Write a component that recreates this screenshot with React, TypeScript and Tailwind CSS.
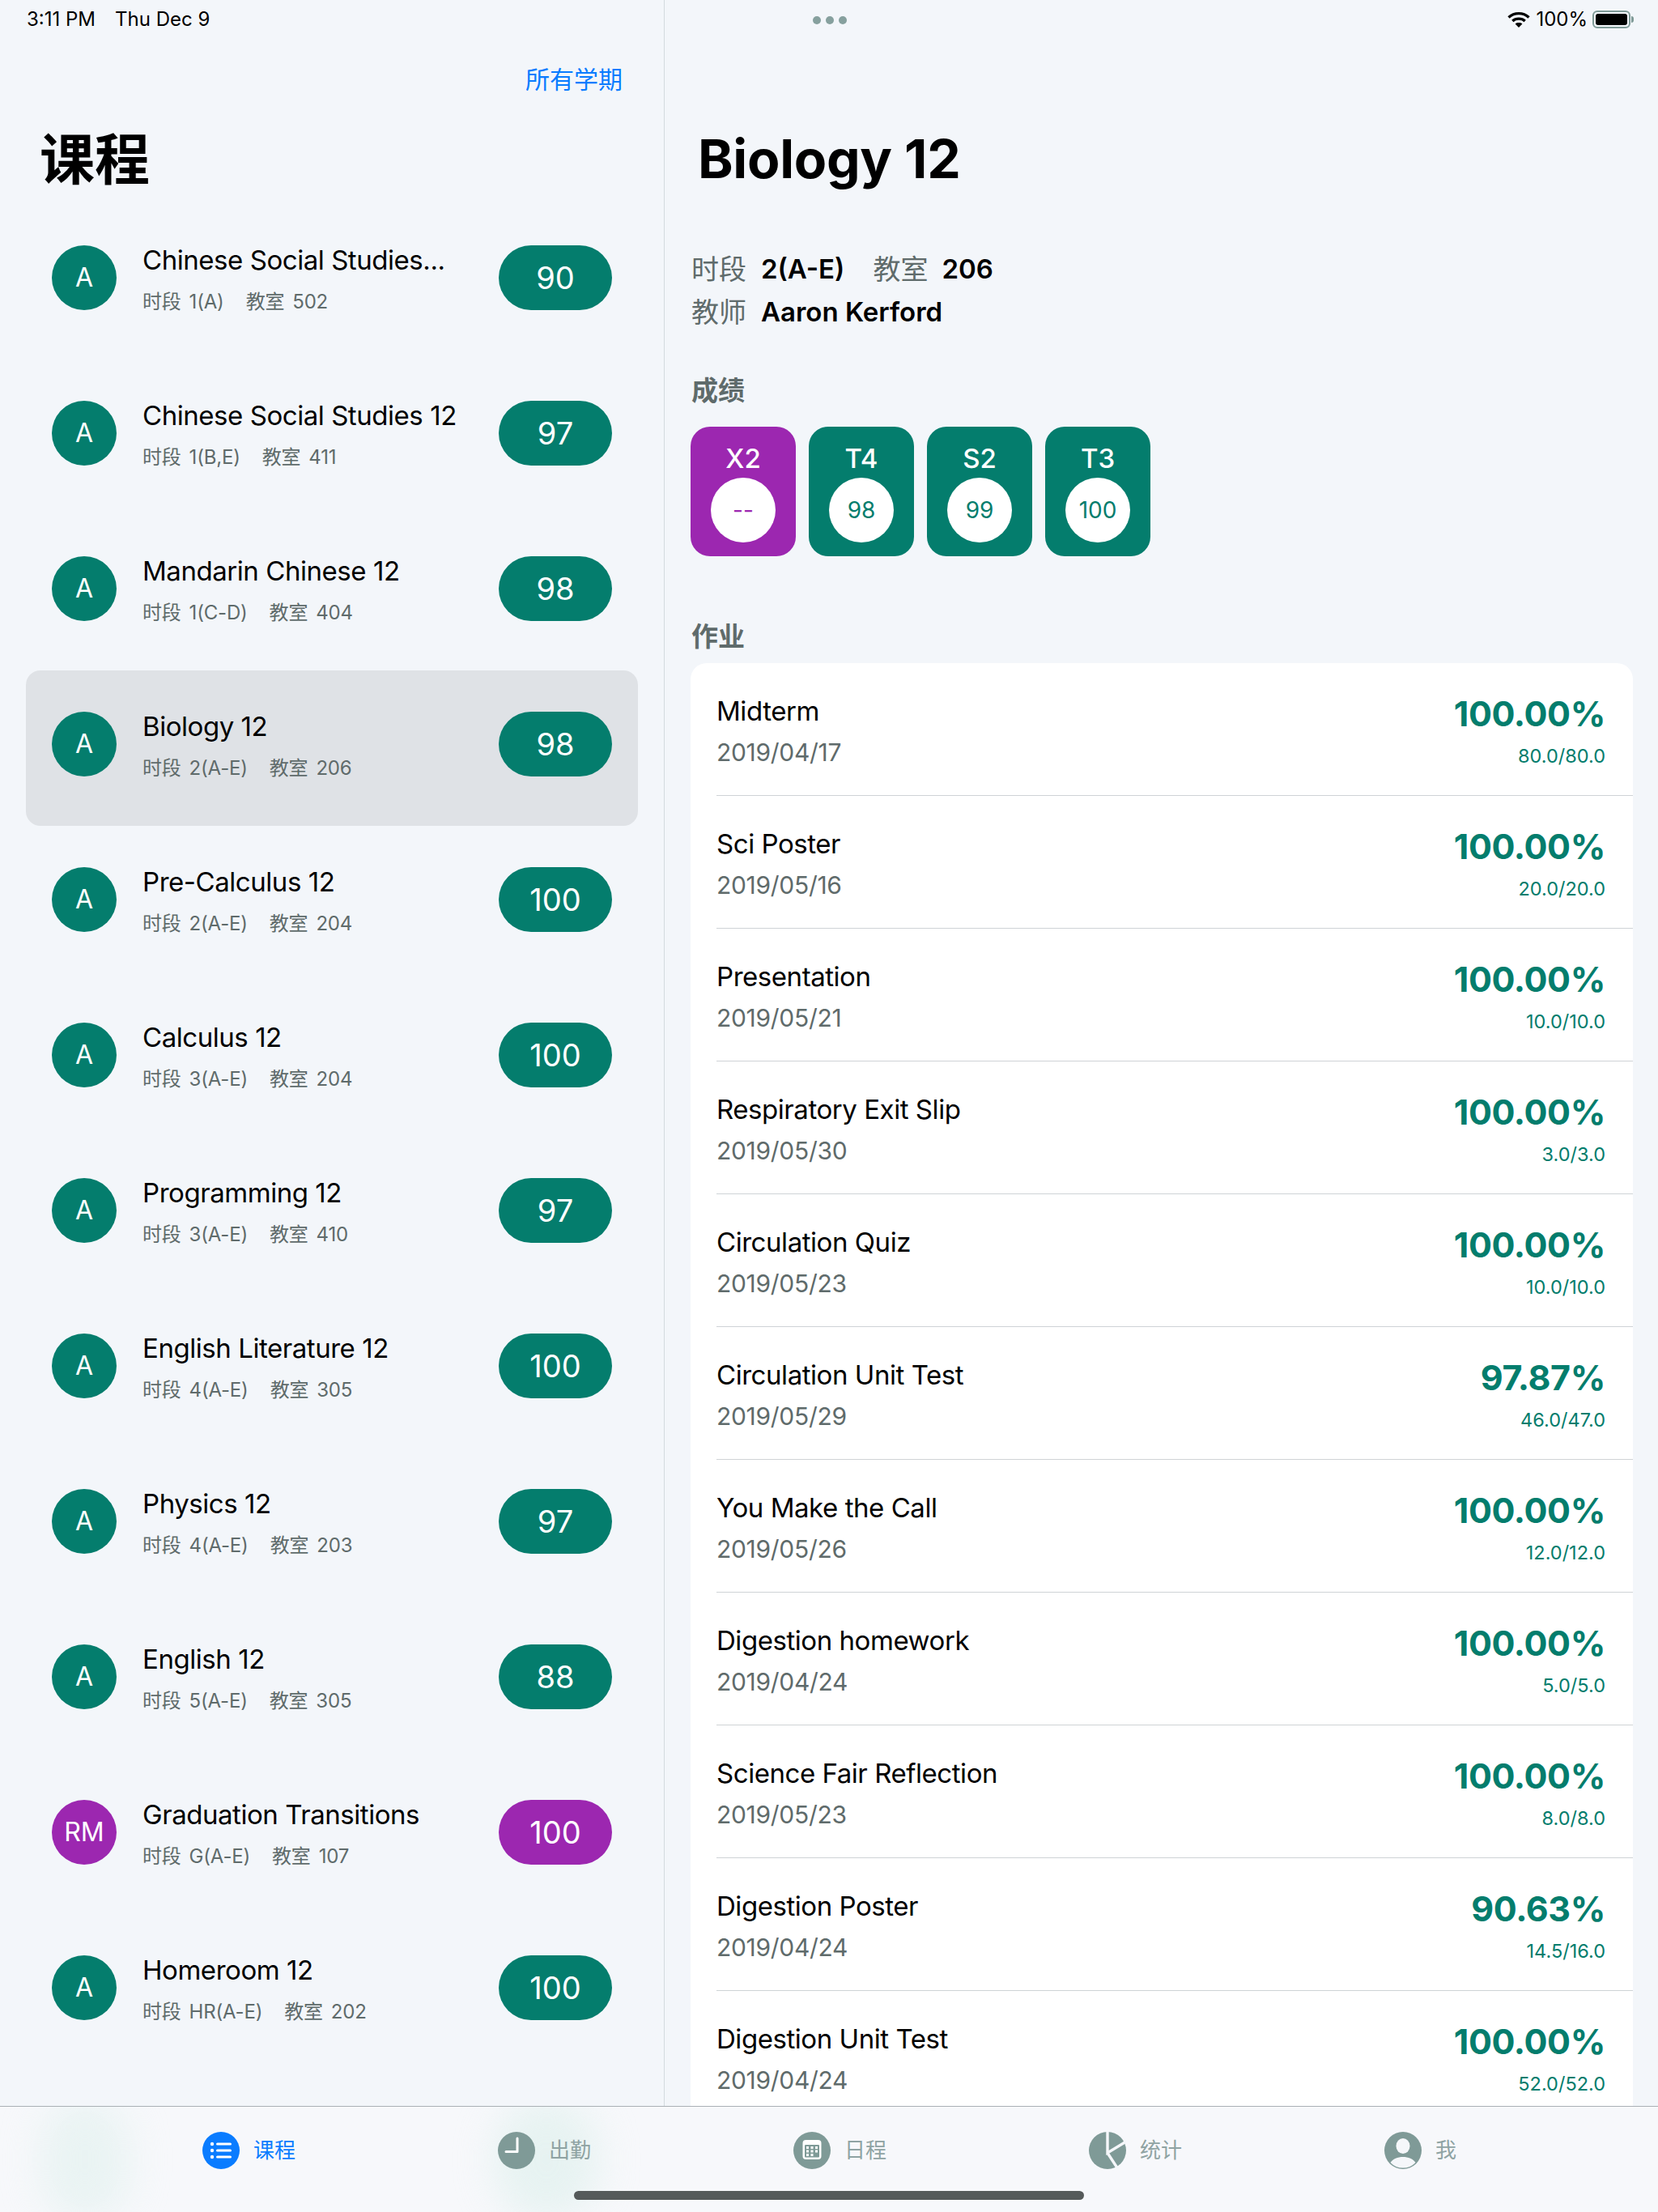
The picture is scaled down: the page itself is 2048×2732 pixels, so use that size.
const FONT = "font-['Inter','Noto_Sans_CJK_SC',sans-serif]";

type Course = { name: string; period: string; room: string; grade: string; avatar?: string };

const courses: Course[] = [
  { name: "Chinese Social Studies...", period: "1(A)", room: "502", grade: "90" },
  { name: "Chinese Social Studies 12", period: "1(B,E)", room: "411", grade: "97" },
  { name: "Mandarin Chinese 12", period: "1(C-D)", room: "404", grade: "98" },
  { name: "Biology 12", period: "2(A-E)", room: "206", grade: "98" },
  { name: "Pre-Calculus 12", period: "2(A-E)", room: "204", grade: "100" },
  { name: "Calculus 12", period: "3(A-E)", room: "204", grade: "100" },
  { name: "Programming 12", period: "3(A-E)", room: "410", grade: "97" },
  { name: "English Literature 12", period: "4(A-E)", room: "305", grade: "100" },
  { name: "Physics 12", period: "4(A-E)", room: "203", grade: "97" },
  { name: "English 12", period: "5(A-E)", room: "305", grade: "88" },
  { name: "Graduation Transitions", period: "G(A-E)", room: "107", grade: "100", avatar: "RM" },
  { name: "Homeroom 12", period: "HR(A-E)", room: "202", grade: "100" },
];

const assignments = [
  ["Midterm", "2019/04/17", "100.00%", "80.0/80.0"],
  ["Sci Poster", "2019/05/16", "100.00%", "20.0/20.0"],
  ["Presentation", "2019/05/21", "100.00%", "10.0/10.0"],
  ["Respiratory Exit Slip", "2019/05/30", "100.00%", "3.0/3.0"],
  ["Circulation Quiz", "2019/05/23", "100.00%", "10.0/10.0"],
  ["Circulation Unit Test", "2019/05/29", "97.87%", "46.0/47.0"],
  ["You Make the Call", "2019/05/26", "100.00%", "12.0/12.0"],
  ["Digestion homework", "2019/04/24", "100.00%", "5.0/5.0"],
  ["Science Fair Reflection", "2019/05/23", "100.00%", "8.0/8.0"],
  ["Digestion Poster", "2019/04/24", "90.63%", "14.5/16.0"],
  ["Digestion Unit Test", "2019/04/24", "100.00%", "52.0/52.0"],
];

const terms = [
  { label: "X2", value: "--", purple: true },
  { label: "T4", value: "98" },
  { label: "S2", value: "99" },
  { label: "T3", value: "100" },
];

function StatusBar() {
  return (
    <div className="absolute inset-x-0 top-0 z-10 flex h-[48px] items-center justify-between pl-[33px] pr-[30px] text-[24px] leading-[30px] text-black">
      <div className="flex gap-[24px]">
        <span>3:11 PM</span>
        <span>Thu Dec 9</span>
      </div>
      <div className="absolute left-[1004px] top-[20px] flex gap-[6px]">
        <span className="h-[10px] w-[10px] rounded-full bg-[#86a09e]" />
        <span className="h-[10px] w-[10px] rounded-full bg-[#86a09e]" />
        <span className="h-[10px] w-[10px] rounded-full bg-[#86a09e]" />
      </div>
      <div className="flex items-center">
        <svg width="28" height="20" viewBox="0 0 28 20" fill="none" stroke="black" strokeWidth="3.4">
          <path d="M1.5 7.5 C8.5 1 19.5 1 26.5 7.5" />
          <path d="M6.3 12 C10.5 8.2 17.5 8.2 21.7 12" />
          <path d="M14 20 L9.6 15.4 C12 13.6 16 13.6 18.4 15.4 Z" fill="black" stroke="none" />
        </svg>
        <span className="ml-[7px]">100%</span>
        <span className="ml-[6px] flex h-[22px] w-[47px] rounded-[6px] border-2 border-[#7f9a97] p-[2px]">
          <span className="flex-1 rounded-[3px] bg-black" />
        </span>
        <span className="ml-[1px] h-[8px] w-[3px] rounded-r-full bg-[#7f9a97]" />
      </div>
    </div>
  );
}

function CourseRow({ course, active }: { course: Course; active: boolean }) {
  const fill = course.avatar ? "bg-[#9c27b0]" : "bg-[#047d6d]";
  return (
    <div className={`flex h-[192px] items-center rounded-[18px] px-[32px] pb-[10px] ${active ? "bg-[#dfe2e6]" : ""}`}>
      <div className={`flex h-[80px] w-[80px] items-center justify-center rounded-full text-[32px] text-white ${fill}`}>
        {course.avatar ?? "A"}
      </div>
      <div className="ml-[32px] pt-[3px]">
        <div className="text-[33px] leading-[40px] tracking-[-0.45px] text-black">{course.name}</div>
        <div className="mt-[16px] flex text-[24px] leading-[32px] tracking-[-0.2px] text-[#5f6b6b]">
          <span>时段</span>
          <span className="ml-[10px]">{course.period}</span>
          <span className="ml-[27px]">教室</span>
          <span className="ml-[10px]">{course.room}</span>
        </div>
      </div>
      <div className={`ml-auto flex h-[80px] w-[140px] items-center justify-center rounded-full text-[38px] text-white ${fill}`}>
        {course.grade}
      </div>
    </div>
  );
}

function CoursesPane() {
  return (
    <aside className="w-[821px] shrink-0 border-r border-[#d3dade]">
      <div className="pt-[80px] pr-[51px] text-right text-[30px] leading-[36px] text-[#0a7cff]">所有学期</div>
      <h1 className="ml-[49px] mt-[41px] mb-[15px] text-[68px] font-bold leading-[80px] text-black">课程</h1>
      <div className="px-[32px]">
        {courses.map((course) => (
          <CourseRow key={course.name} course={course} active={course.name === "Biology 12"} />
        ))}
      </div>
    </aside>
  );
}

function TermCard({ label, value, purple }: { label: string; value: string; purple?: boolean }) {
  return (
    <div className={`flex h-[160px] w-[130px] flex-col items-center rounded-[24px] pt-[21px] ${purple ? "bg-[#9c27b0]" : "bg-[#047d6d]"}`}>
      <div className="text-[33px] font-medium leading-[36px] text-white">{label}</div>
      <div className={`mt-[6px] flex h-[80px] w-[80px] items-center justify-center rounded-full bg-white text-[28px] ${purple ? "text-[#9c27b0]" : "text-[#047d6d]"}`}>
        {value}
      </div>
    </div>
  );
}

function AssignmentRow({ row }: { row: string[] }) {
  const [name, date, percent, score] = row;
  return (
    <div className="pl-[32px]">
      <div className="flex h-[164px] justify-between border-b border-[#cfd3d6] pr-[34px]">
        <div className="pt-[39px]">
          <div className="text-[33px] leading-[40px] tracking-[-0.45px] text-black">{name}</div>
          <div className="mt-[13px] text-[30px] leading-[36px] tracking-[-0.3px] text-[#5f6b6b]">{date}</div>
        </div>
        <div className="pt-[37px] text-right text-[#047d6d]">
          <div className="text-[43px] font-bold leading-[50px] tracking-[-0.4px]">{percent}</div>
          <div className="mt-[13px] text-[23.5px] leading-[30px]">{score}</div>
        </div>
      </div>
    </div>
  );
}

function DetailPane() {
  return (
    <main className="min-w-0 flex-1 overflow-hidden pl-[32px] pr-[31px]">
      <h2 className="ml-[9px] mt-[156px] text-[66px] font-bold leading-[80px] tracking-[-0.3px] text-black">Biology 12</h2>
      <div className="mt-[70px] text-[33px] font-semibold leading-[53px] text-black">
        <div className="flex">
          <span className="ml-[1px] w-[86px] text-[34px] font-normal text-[#5f6b6b]">时段</span>
          <span>2(A-E)</span>
          <span className="ml-[35px] w-[85px] text-[34px] font-normal text-[#5f6b6b]">教室</span>
          <span>206</span>
        </div>
        <div className="flex">
          <span className="ml-[1px] w-[86px] text-[34px] font-normal text-[#5f6b6b]">教师</span>
          <span>Aaron Kerford</span>
        </div>
      </div>
      <div className="ml-[1px] mt-[50px] text-[33px] font-semibold leading-[40px] text-[#5f6b6b]">成绩</div>
      <div className="mt-[25px] flex gap-[16px]">
        {terms.map((term) => (
          <TermCard key={term.label} {...term} />
        ))}
      </div>
      <div className="ml-[1px] mt-[79px] text-[33px] font-semibold leading-[40px] text-[#5f6b6b]">作业</div>
      <div className="mt-[13px] rounded-[20px] bg-white">
        {assignments.map((row) => (
          <AssignmentRow key={row[0]} row={row} />
        ))}
      </div>
    </main>
  );
}

const ICON_GRAY = "#7f9a97";
const ICON_CUT = "#f5f7fa";

function ListIcon() {
  return (
    <svg width="46" height="46" viewBox="0 0 46 46">
      <circle cx="23" cy="23" r="23" fill="#0a7cff" />
      <g fill="white">
        <circle cx="12" cy="15" r="2.2" />
        <circle cx="12" cy="23" r="2.2" />
        <circle cx="12" cy="31" r="2.2" />
        <rect x="17" y="13.5" width="19" height="3" rx="1.5" />
        <rect x="17" y="21.5" width="19" height="3" rx="1.5" />
        <rect x="17" y="29.5" width="19" height="3" rx="1.5" />
      </g>
    </svg>
  );
}

function ClockIcon() {
  return (
    <svg width="46" height="46" viewBox="0 0 46 46">
      <circle cx="23" cy="23" r="23" fill={ICON_GRAY} />
      <path d="M24 8 V24.5 H10" fill="none" stroke="white" strokeWidth="3" strokeLinecap="round" strokeLinejoin="round" />
    </svg>
  );
}

function CalendarIcon() {
  return (
    <svg width="46" height="46" viewBox="0 0 46 46">
      <circle cx="23" cy="23" r="23" fill={ICON_GRAY} />
      <rect x="11.5" y="10" width="23" height="24" rx="4" fill="white" />
      <rect x="14" y="16" width="18" height="15.5" rx="1" fill={ICON_GRAY} />
      <g fill="white">
        <rect x="16" y="18" width="3" height="3" />
        <rect x="21.5" y="18" width="3" height="3" />
        <rect x="27" y="18" width="3" height="3" />
        <rect x="16" y="22.5" width="3" height="3" />
        <rect x="21.5" y="22.5" width="3" height="3" />
        <rect x="27" y="22.5" width="3" height="3" />
        <rect x="16" y="27" width="3" height="3" />
        <rect x="21.5" y="27" width="3" height="3" />
      </g>
    </svg>
  );
}

function PieIcon() {
  return (
    <svg width="46" height="46" viewBox="0 0 46 46">
      <circle cx="23" cy="23" r="23" fill={ICON_GRAY} />
      <path d="M23 -1 V26 L46 12 M23 26 L36 46" fill="none" stroke={ICON_CUT} strokeWidth="3.4" />
    </svg>
  );
}

function PersonIcon() {
  return (
    <svg width="46" height="46" viewBox="0 0 46 46">
      <circle cx="23" cy="23" r="23" fill={ICON_GRAY} />
      <ellipse cx="23" cy="17.5" rx="8.5" ry="9.5" fill={ICON_CUT} />
      <path d="M7.5 38 C13 28.5 33 28.5 38.5 38 A21.5 21.5 0 0 1 7.5 38 Z" fill={ICON_CUT} />
    </svg>
  );
}

const tabs = [
  { label: "课程", icon: <ListIcon />, active: true },
  { label: "出勤", icon: <ClockIcon /> },
  { label: "日程", icon: <CalendarIcon /> },
  { label: "统计", icon: <PieIcon /> },
  { label: "我", icon: <PersonIcon /> },
];

function TabBar() {
  return (
    <nav className="relative h-[131px] shrink-0 overflow-hidden border-t border-[#a9b0b5] bg-[#f7f8fb]">
      <div className="absolute left-[50px] top-[-10px] h-[150px] w-[110px] rounded-full bg-[#dcefeb] opacity-50 blur-xl" />
      <div className="absolute left-[610px] top-[-10px] h-[150px] w-[130px] rounded-full bg-[#dcefeb] opacity-60 blur-xl" />
      <div className="relative flex pl-[250px] pt-[31px]">
        {tabs.map((tab) => (
          <div key={tab.label} className="flex w-[365px] shrink-0 items-center gap-[17px]">
            {tab.icon}
            <span className={`text-[26px] leading-[46px] ${tab.active ? "text-[#0a7cff]" : "text-[#8fa3a3]"}`}>{tab.label}</span>
          </div>
        ))}
      </div>
      <div className="absolute left-[709px] top-[104px] h-[11px] w-[630px] rounded-full bg-[#555a5a]" />
    </nav>
  );
}

export default function App() {
  return (
    <div className={`relative flex h-[2732px] w-[2048px] flex-col overflow-hidden bg-[#f3f6fa] ${FONT}`}>
      <StatusBar />
      <div className="flex min-h-0 flex-1">
        <CoursesPane />
        <DetailPane />
      </div>
      <TabBar />
    </div>
  );
}
